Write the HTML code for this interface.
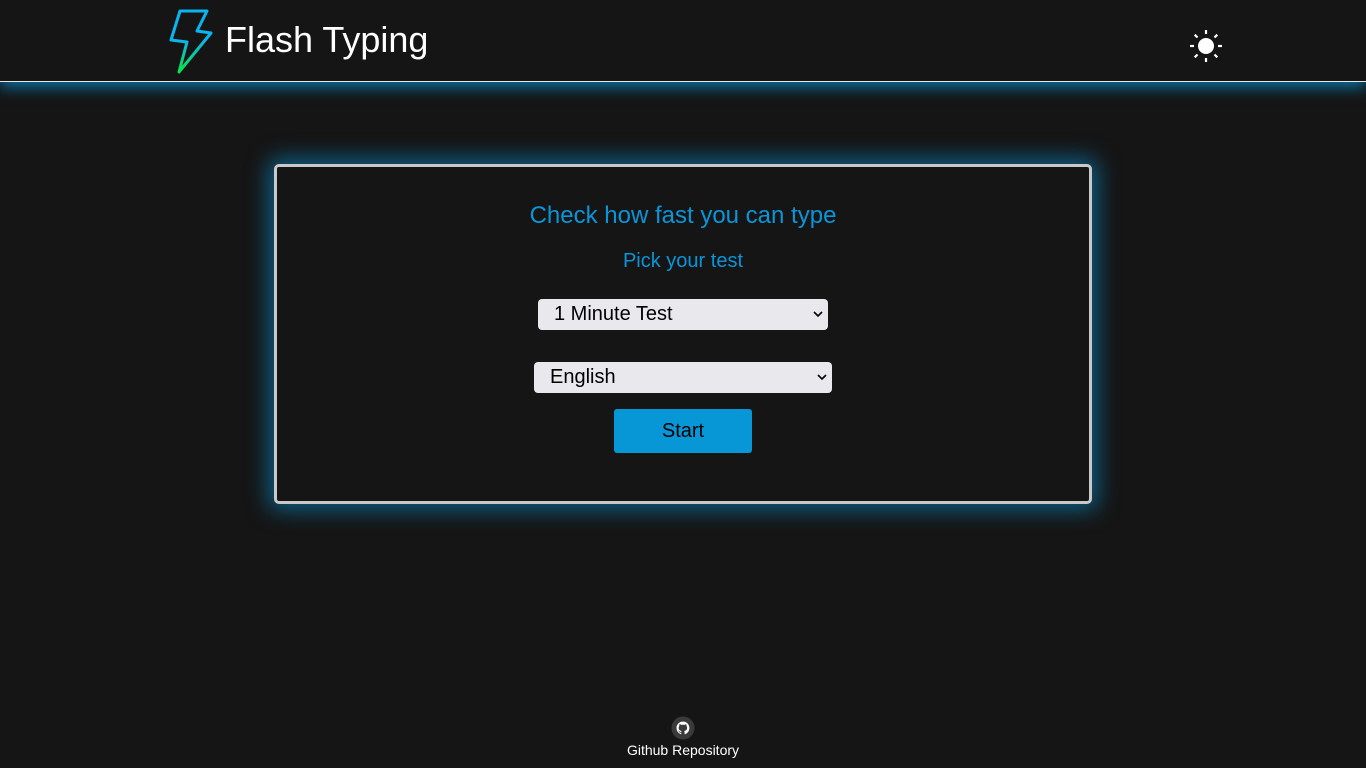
<!DOCTYPE html>
<html><head><meta charset="utf-8"><style>
html,body{margin:0;padding:0;background:#151515;width:1366px;height:768px;overflow:hidden;font-family:"Liberation Sans",Arial,sans-serif;}
.hdr{position:absolute;left:0;top:0;width:1366px;height:81px;border-bottom:1px solid #e8e8e8;box-shadow:0 5px 14px rgba(8,140,200,0.8);background:#151515;}
.title{position:absolute;left:225px;top:19px;color:#fff;font-size:36px;}
.card{position:absolute;left:274px;top:164px;width:812px;height:334px;border:3px solid #c9c9c9;border-radius:5px;box-shadow:0 0 22px 6px rgba(10,140,200,0.6);background:#151515;}
.h1{position:absolute;left:0;width:100%;text-align:center;color:#0a95d8;}
.sel{position:absolute;background:#e9e8ed;border-radius:4px;font-size:20px;color:#000;box-sizing:border-box;padding-left:16px;line-height:31px;height:31px;}
.sel svg{position:absolute;right:5px;top:11px;}
.btn{position:absolute;left:614px;top:409px;width:138px;height:44px;background:#0897d6;border-radius:3px;color:#000;font-size:20px;text-align:center;line-height:44px;}
.foot{position:absolute;left:0;width:1366px;top:742px;text-align:center;color:#fff;font-size:14px;}
</style></head><body>
<div class="hdr">
<svg style="position:absolute;left:166px;top:8px" width="50" height="70" viewBox="166 8 50 70">
<defs><linearGradient id="g" x1="0" y1="0" x2="0" y2="1"><stop offset="0.45" stop-color="#0ab4f0"/><stop offset="1" stop-color="#0be04a"/></linearGradient></defs>
<path d="M180 11 L207 11 L197 31 L211 33 L179 72 L187 42 L171 40 Z" fill="none" stroke="url(#g)" stroke-width="3" stroke-linejoin="round"/>
</svg>
<div class="title">Flash Typing</div>
<svg style="position:absolute;left:1188px;top:28px" width="36" height="36" viewBox="0 0 36 36">
<circle cx="18" cy="18" r="8" fill="#fff"/>
<g stroke="#fff" stroke-width="2.2" stroke-linecap="butt">
<line x1="18" y1="2" x2="18" y2="6"/><line x1="18" y1="30" x2="18" y2="34"/>
<line x1="2" y1="18" x2="6" y2="18"/><line x1="30" y1="18" x2="34" y2="18"/>
<line x1="6.7" y1="6.7" x2="9.5" y2="9.5"/><line x1="26.5" y1="26.5" x2="29.3" y2="29.3"/>
<line x1="29.3" y1="6.7" x2="26.5" y2="9.5"/><line x1="9.5" y1="26.5" x2="6.7" y2="29.3"/>
</g></svg>
</div>
<div class="card"></div>
<div class="h1" style="top:202px;font-size:24px;">Check how fast you can type</div>
<div class="h1" style="top:250px;font-size:20px;">Pick your test</div>
<div class="sel" style="left:538px;top:299px;width:290px;">1 Minute Test<svg width="10" height="8" viewBox="0 0 10 8"><path d="M1 2 L5 6 L9 2" fill="none" stroke="#000" stroke-width="1.6"/></svg></div>
<div class="sel" style="left:534px;top:362px;width:298px;">English<svg width="10" height="8" viewBox="0 0 10 8"><path d="M1 2 L5 6 L9 2" fill="none" stroke="#000" stroke-width="1.6"/></svg></div>
<div class="btn">Start</div>
<svg style="position:absolute;left:671px;top:716px" width="24" height="24" viewBox="0 0 24 24">
<circle cx="12" cy="12" r="11.5" fill="#3a3a3a"/>
<path d="M12 5.5c-3.6 0-6.5 2.9-6.5 6.5 0 2.9 1.9 5.3 4.4 6.2.3 0 .4-.1.4-.3v-1.2c-1.8.4-2.2-.8-2.2-.8-.3-.7-.7-.9-.7-.9-.6-.4 0-.4 0-.4.6 0 1 .7 1 .7.6 1 1.5.7 1.900.5 0-.4.2-.7.4-.9-1.4-.2-3-.7-3-3.2 0-.7.3-1.300.7-1.8-.1-.2-.3-.8.1-1.7 0 0 .5-.2 1.8.7.5-.1 1.1-.2 1.6-.2s1.1.1 1.6.2c1.2-.8 1.8-.7 1.8-.7.4.9.1 1.5.1 1.7.4.5.7 1 .7 1.8 0 2.5-1.5 3-3 3.2.2.2.5.6.5 1.2v1.8c0 .2.1.4.4.3 2.6-.9 4.4-3.3 4.4-6.2 0-3.6-2.9-6.5-6.5-6.5z" fill="#fff"/>
</svg>
<div class="foot">Github Repository</div>
</body></html>
